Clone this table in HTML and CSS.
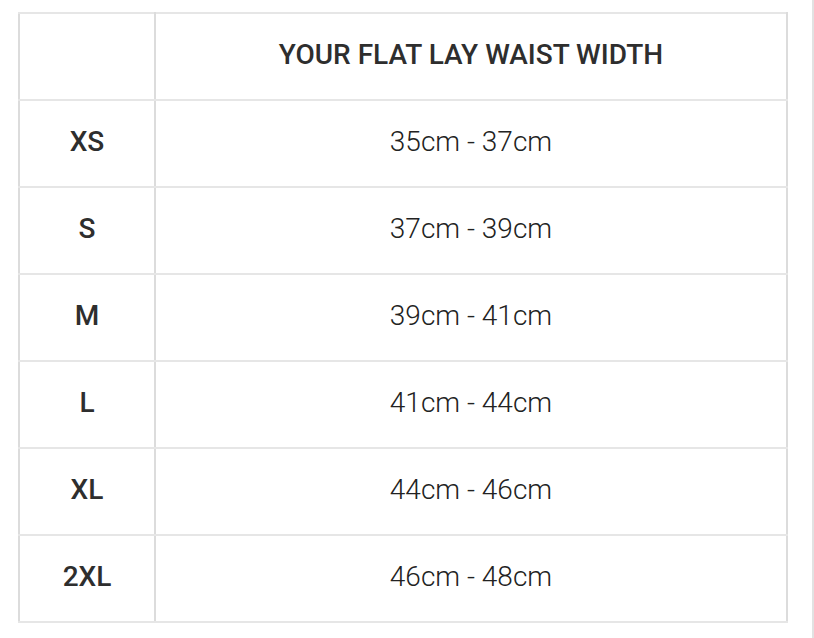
FILE: index.html
```html
<!DOCTYPE html>
<html>
<head>
<meta charset="utf-8">
<link rel="stylesheet" href="styles.css">
</head>
<body>
<div class="page">
  <table class="size-table">
    <colgroup><col class="c1"><col class="c2"></colgroup>
    <thead>
      <tr><th></th><th>YOUR FLAT LAY WAIST WIDTH</th></tr>
    </thead>
    <tbody>
      <tr><td class="size">XS</td><td>35cm - 37cm</td></tr>
      <tr><td class="size">S</td><td>37cm - 39cm</td></tr>
      <tr><td class="size">M</td><td>39cm - 41cm</td></tr>
      <tr><td class="size">L</td><td>41cm - 44cm</td></tr>
      <tr><td class="size">XL</td><td>44cm - 46cm</td></tr>
      <tr><td class="size">2XL</td><td>46cm - 48cm</td></tr>
    </tbody>
  </table>
  <div class="edge"></div>
</div>
</body>
</html>
```
FILE: styles.css
```css
html, body {
  margin: 0;
  padding: 0;
  background: #ffffff;
}
.page {
  width: 814px;
  height: 638px;
  display: flex;
  align-items: flex-start;
  box-sizing: border-box;
  padding: 12px 0 0 18px;
  font-family: Roboto, "Liberation Sans", sans-serif;
  color: #2e2e2e;
}
.size-table {
  border-collapse: collapse;
  width: 770px;
  table-layout: fixed;
  border: 2px solid #e4e4e4;
}
.c1 { width: 136px; }
.size-table th,
.size-table td {
  border-top: 2px solid #e6e6e6;
  border-bottom: 2px solid #e6e6e6;
  border-left: 2px solid #dcdcdc;
  border-right: 2px solid #dcdcdc;
  text-align: center;
  vertical-align: middle;
  height: 81px;
  padding: 0 0 4px 0;
  font-size: 28px;
  line-height: 1;
}
.size-table th {
  font-weight: 500;
}
.size-table td {
  font-weight: 300;
  color: #222222;
}
.size-table td.size {
  font-weight: 500;
  color: #2e2e2e;
}
.edge {
  margin-left: auto;
  width: 2px;
  height: 638px;
  margin-top: -12px;
  background: #e2e2e2;
}
```
